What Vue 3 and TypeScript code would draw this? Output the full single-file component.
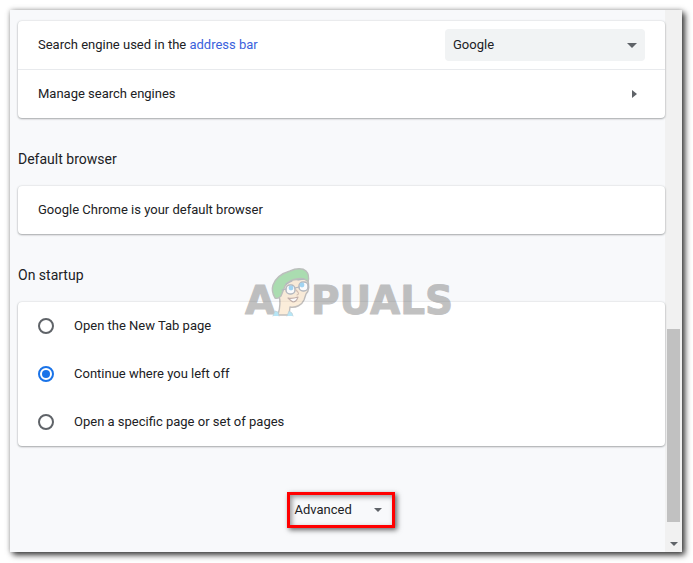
<script setup lang="ts">
import { ref } from 'vue'

const engines: string[] = ['Google', 'Bing', 'Yahoo!', 'DuckDuckGo']
const engine = ref('Google')

const startupOptions = [
  { id: 'new-tab', label: 'Open the New Tab page' },
  { id: 'continue', label: 'Continue where you left off' },
  { id: 'specific', label: 'Open a specific page or set of pages' },
]
const startup = ref('continue')
</script>

<template>
  <div class="window">
    <main class="content">
      <section class="card">
        <div class="row divided">
          <label for="engine">Search engine used in the <a href="#address-bar">address bar</a></label>
          <span class="select-wrap">
            <select id="engine" v-model="engine">
              <option v-for="name in engines" :key="name">{{ name }}</option>
            </select>
            <svg class="caret" viewBox="0 0 10 5" width="10" height="5" aria-hidden="true">
              <path d="M0 0h10L5 5z" />
            </svg>
          </span>
        </div>
        <button type="button" class="row row-button">
          <span>Manage search engines</span>
          <svg class="chevron" viewBox="0 0 5 8" width="5" height="8" aria-hidden="true">
            <path d="M0 0v8l5-4z" />
          </svg>
        </button>
      </section>

      <h2>Default browser</h2>
      <section class="card">
        <div class="row">Google Chrome is your default browser</div>
      </section>

      <h2 id="startup-title">On startup</h2>
      <section class="card" role="radiogroup" aria-labelledby="startup-title">
        <label v-for="option in startupOptions" :key="option.id" class="row radio-row">
          <input v-model="startup" type="radio" name="startup" :value="option.id" />
          <span>{{ option.label }}</span>
        </label>
        <div class="watermark">
          <svg viewBox="0 0 210 52" width="210" height="52">
            <g class="letters">
              <text x="0" y="49">A</text>
              <text x="66" y="49">PUALS</text>
            </g>
            <g stroke-linejoin="round" stroke-linecap="round">
              <path d="M34 31C36 37 35 43 33 50H44L45 42C51 43 57 40 59 35L61 29C64 26 65 20 62 14L43 15L36 23Z" fill="#f8d9af" stroke="#77716d" stroke-width="1.4" />
              <path d="M28 51l2-5 3 1 1 4M42 51l2-5 3 2 1 3" fill="#62c8ed" stroke="#6e96a5" stroke-width=".7" />
              <path d="M30 33C27 28 27 23 28 20C31 12 38 8 45 6C51 3 58 3 61 6C64 9 64 13 63 17C60 13 56 13 51 14C45 15 42 18 40 21L36 31C34 33 32 34 30 33Z" fill="#4eb957" stroke="#737a72" stroke-width="1.4" />
              <rect x="41" y="20" width="9" height="9" rx="4" fill="#fff" stroke="#626976" stroke-width="1.5" />
              <rect x="54" y="17" width="9" height="9" rx="4" fill="#fff" stroke="#626976" stroke-width="1.5" />
              <path d="M37 25l4-1M50 23l4-1M41 19l6-3M53 15l6-1" fill="none" stroke="#626976" stroke-width="1.2" />
              <circle cx="46" cy="23" r="2.4" fill="#39a8e8" />
              <circle cx="57" cy="20" r="2.4" fill="#39a8e8" />
              <path d="M51 25c2 2 4 4 1 5" fill="none" stroke="#a8795d" stroke-width="1.1" />
              <path d="M43 33c4 1 7 0 10-1c-1 3-2 5-5 5c-2-1-3-2-5-4z" fill="#fff" stroke="#83594c" stroke-width="1.1" />
            </g>
          </svg>
        </div>
      </section>

      <button type="button" class="advanced">
        <span>Advanced</span>
        <svg viewBox="0 0 8 4" width="8" height="4" aria-hidden="true"><path d="M0 0h8L4 4z" /></svg>
      </button>
    </main>

    <div class="scrollbar" aria-hidden="true">
      <div class="thumb"></div>
      <svg viewBox="0 0 8 4" width="8" height="4"><path d="M0 0h8L4 4z" /></svg>
    </div>
  </div>
</template>

<style>
body {
  margin: 0;
  background: #fff;
}
</style>

<style scoped>
* {
  box-sizing: border-box;
}

.window {
  display: flex;
  min-height: calc(100vh - 21px);
  margin: 10px 11px 11px 10px;
  background: #f8f9fb;
  box-shadow: 0 0 5px rgba(0, 0, 0, 0.25), 3px 3px 6px rgba(0, 0, 0, 0.75);
  color: #202124;
  font-family: Roboto, "Liberation Sans", sans-serif;
  font-size: 13px;
  line-height: 20px;
}

.content {
  flex: 1;
  display: flex;
  flex-direction: column;
  padding: 11px 0 24px 8px;
}

.card {
  position: relative;
  background: #fff;
  border-radius: 4px;
  box-shadow: 0 1px 2px rgba(60, 64, 67, 0.4), 0 0 2px rgba(60, 64, 67, 0.2);
}

.row {
  display: flex;
  align-items: center;
  justify-content: space-between;
  width: 100%;
  min-height: 48px;
  padding: 0 20px;
}

.divided {
  min-height: 49px;
  border-bottom: 1px solid #e8eaed;
}

.row-button {
  border: 0;
  background: none;
  color: inherit;
  font: inherit;
  text-align: left;
}

a {
  color: #3b62dc;
  text-decoration: none;
}

svg {
  fill: #5f6368;
}

.select-wrap {
  display: grid;
  align-items: center;
  width: 200px;
}

.select-wrap > * {
  grid-area: 1 / 1;
}

select {
  appearance: none;
  width: 100%;
  height: 32px;
  padding: 0 24px 0 8px;
  border: 0;
  border-radius: 4px;
  background: #f1f3f4;
  color: inherit;
  font: inherit;
}

.caret {
  justify-self: end;
  margin-right: 8px;
  pointer-events: none;
}

.chevron {
  margin-right: 8px;
}

h2 {
  margin: 31px 0 17px;
  font-size: 14px;
  font-weight: 400;
  line-height: 20px;
}

.radio-row {
  justify-content: flex-start;
  gap: 20px;
}

input {
  appearance: none;
  display: grid;
  place-items: center;
  width: 16px;
  height: 16px;
  margin: 0;
  border: 2px solid #5f6368;
  border-radius: 50%;
}

input:checked {
  border-color: #1a73e8;
}

input:checked::before {
  content: "";
  width: 8px;
  height: 8px;
  border-radius: 50%;
  background: #1a73e8;
}

.watermark {
  position: absolute;
  top: -37px;
  left: 227px;
  height: 52px;
  opacity: 0.45;
  pointer-events: none;
}

.watermark svg {
  overflow: visible;
}

.letters {
  fill: #777;
  stroke: #777;
  stroke-width: 1px;
  stroke-linejoin: round;
  font-family: "DejaVu Sans", sans-serif;
  font-size: 39px;
  font-weight: 700;
}

.advanced {
  display: flex;
  align-items: center;
  align-self: center;
  justify-content: space-between;
  width: 108px;
  height: 36px;
  margin: 46px 2px 0 0;
  padding: 0 10px 0 5px;
  border: 3px solid #f00;
  background: #f8f9fb;
  box-shadow: 2px 2px 5px rgba(0, 0, 0, 0.6), inset 2px 2px 5px rgba(0, 0, 0, 0.4);
  color: inherit;
  font: inherit;
}

.scrollbar {
  display: flex;
  flex-direction: column;
  align-items: center;
  justify-content: flex-end;
  gap: 20px;
  width: 17px;
  padding-bottom: 6px;
  background: #f1f1f1;
}

.thumb {
  width: 13px;
  height: 36%;
  background: #c1c1c1;
}
</style>
